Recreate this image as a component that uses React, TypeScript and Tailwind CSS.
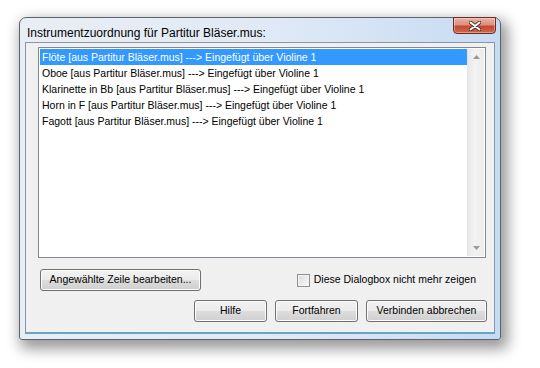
import { useState } from 'react';

const ROWS = [
  'Flöte [aus Partitur Bläser.mus] ---> Eingefügt über Violine 1',
  'Oboe [aus Partitur Bläser.mus] ---> Eingefügt über Violine 1',
  'Klarinette in Bb [aus Partitur Bläser.mus] ---> Eingefügt über Violine 1',
  'Horn in F [aus Partitur Bläser.mus] ---> Eingefügt über Violine 1',
  'Fagott [aus Partitur Bläser.mus] ---> Eingefügt über Violine 1',
];

const btn =
  'h-[22px] rounded-[3px] border border-[#707070] bg-[linear-gradient(#f2f2f2_0%,#ebebeb_48%,#dddddd_52%,#cfcfcf_100%)] text-[10.5px] text-black shadow-[inset_0_0_0_1px_#fcfcfc]';

export default function App() {
  const [selected, setSelected] = useState(0);
  const [hide, setHide] = useState(false);

  return (
    <div className="w-[540px] h-[368px] bg-white pt-[17px] pl-[19px] font-['Liberation_Sans',Arial,sans-serif]">
      <div className="w-[482px] h-[323px] flex flex-col rounded-t-[7px] rounded-b-[3px] border border-[#5a6470] bg-[linear-gradient(90deg,#e9eef5_0%,#dfe9f5_55%,#c6dbf2_100%)] shadow-[4px_6px_14px_3px_rgba(0,0,0,0.4)]">
        {/* title bar */}
        <div className="h-[25px] flex items-start justify-between pl-[7px] pr-[4px]">
          <span className="mt-[8px] text-[12px] leading-[14px] text-black">
            Instrumentzuordnung für Partitur Bläser.mus:
          </span>
          <button className="w-[43px] h-[17px] -mt-px rounded-b-[4px] border border-[#6e2a20] bg-[linear-gradient(#eab0a3_0%,#dc9080_45%,#c44a32_55%,#d0674d_100%)] flex items-center justify-center shadow-[inset_0_0_0_1px_rgba(255,255,255,0.35)]">
            <svg width="12" height="10" viewBox="0 0 12 10">
              <path d="M1.5 1.5 L10.5 8.5 M10.5 1.5 L1.5 8.5" stroke="#4a2a25" strokeWidth="3.6" strokeLinecap="round" />
              <path d="M1.5 1.5 L10.5 8.5 M10.5 1.5 L1.5 8.5" stroke="#ffffff" strokeWidth="2" strokeLinecap="round" />
            </svg>
          </button>
        </div>

        {/* client area */}
        <div className="mx-[5px] mb-[6px] flex-1 flex flex-col border border-[#8a96a3] bg-[#f0f0f0] pl-[12px] pr-[7px] pt-[4px] pb-[10px] shadow-[0_1px_0_#3fb5e3]">
          <div className="h-[211px] mr-px flex border border-[#828790] bg-white p-px">
            <div className="flex-1">
              {ROWS.map((row, i) => (
                <div
                  key={row}
                  onClick={() => setSelected(i)}
                  className={`h-[16px] pl-[2px] text-[10.5px] leading-[16px] whitespace-nowrap ${
                    i === selected ? 'bg-[#3399ff] text-white' : 'text-black'
                  }`}
                >
                  {row}
                </div>
              ))}
            </div>
            <div className="w-[17px] flex flex-col justify-between items-center bg-[linear-gradient(90deg,#e8e8e8,#f2f2f2_40%,#ececec)] border-l border-[#e4e4e4] py-[6px]">
              <svg width="7" height="4" viewBox="0 0 7 4">
                <path d="M0 4 L3.5 0 L7 4 Z" fill="#9a9a9a" />
              </svg>
              <svg width="7" height="4" viewBox="0 0 7 4">
                <path d="M0 0 L3.5 4 L7 0 Z" fill="#9a9a9a" />
              </svg>
            </div>
          </div>

          <div className="mt-[11px] flex items-center justify-between pl-[2px]">
            <button className={`${btn} w-[161px]`}>Angewählte Zeile bearbeiten...</button>
            <label className="flex items-center gap-[4px] mr-[11px] text-[10.5px] text-black">
              <input
                type="checkbox"
                checked={hide}
                onChange={(e) => setHide(e.target.checked)}
                className="appearance-none w-[13px] h-[13px] border border-[#8f8f8f] bg-[linear-gradient(135deg,#dcdcdc,#f8f8f8)] shadow-[inset_0_0_0_1px_#f4f4f4]"
              />
              Diese Dialogbox nicht mehr zeigen
            </label>
          </div>

          <div className="mt-[9px] flex justify-end gap-[8px]">
            <button className={`${btn} w-[73px]`}>Hilfe</button>
            <button className={`${btn} w-[83px] border-[#3c7fb1] shadow-[inset_0_0_0_1px_#7cd4f2]`}>Fortfahren</button>
            <button className={`${btn} w-[121px]`}>Verbinden abbrechen</button>
          </div>
        </div>
      </div>
    </div>
  );
}
